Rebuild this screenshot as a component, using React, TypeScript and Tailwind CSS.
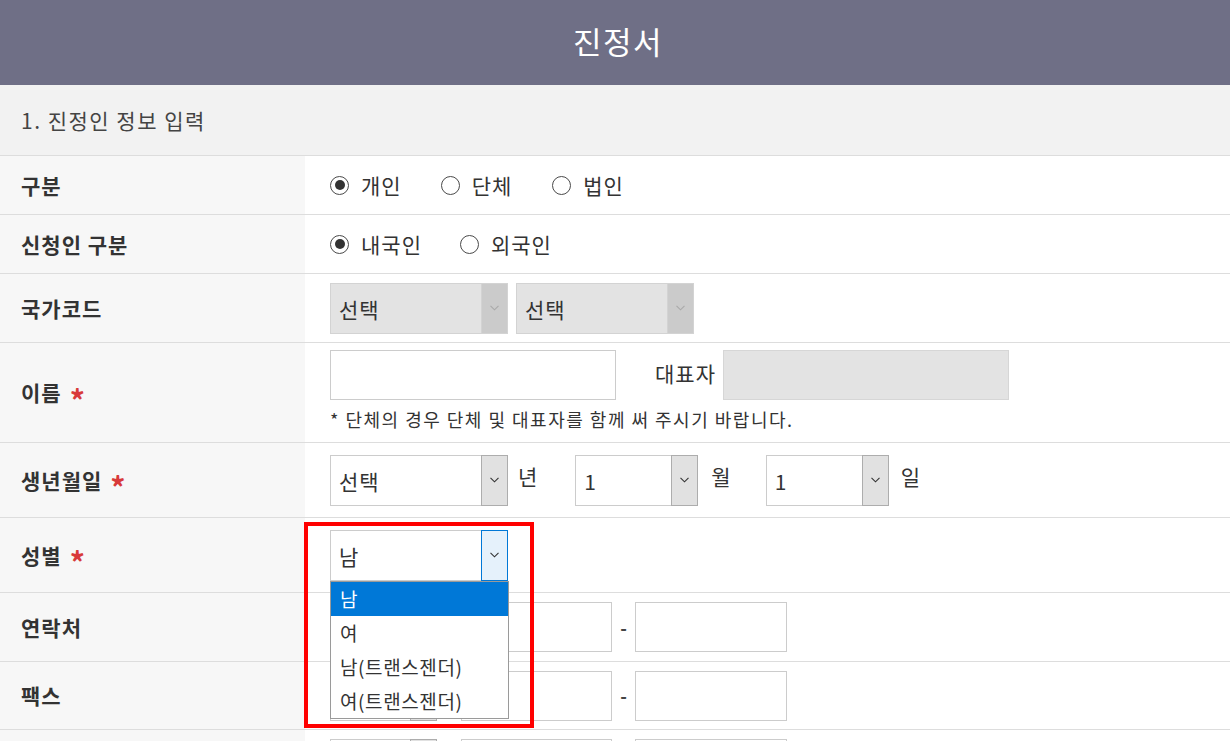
import React from "react";

const FONT = "font-[family-name:'Noto_Sans_CJK_KR','Noto_Sans',sans-serif]";

function Chevron({ color = "#444" }: { color?: string }) {
  return (
    <svg width="9" height="6" viewBox="0 0 9 6" fill="none">
      <path d="M0.5 0.8 L4.5 4.8 L8.5 0.8" stroke={color} strokeWidth="1.1" />
    </svg>
  );
}

function Radio({ checked, label, className = "" }: { checked?: boolean; label: string; className?: string }) {
  return (
    <div className={`flex items-center ${className}`}>
      <span className="w-[19px] h-[19px] rounded-full border border-[#4a4a4a] bg-white flex items-center justify-center">
        {checked && <span className="w-[10px] h-[10px] rounded-full bg-[#333]" />}
      </span>
      <span className="ml-[12px] text-[21px] tracking-[1px] leading-none text-[#333]">{label}</span>
    </div>
  );
}

type SelVariant = "disabled" | "normal" | "focus";

function Select({ text, width, variant = "normal" }: { text: string; width: string; variant?: SelVariant }) {
  const box =
    variant === "disabled"
      ? "bg-[#e3e3e3] border-[#d3d3d3]"
      : "bg-white border-[#cccccc]";
  const arrow =
    variant === "disabled"
      ? "bg-[#cbcbcb] border-[#d3d3d3]"
      : variant === "focus"
      ? "bg-[#e5f1fb] border-[#0078d7]"
      : "bg-[#e1e1e1] border-[#adadad]";
  return (
    <div className={`flex h-[51px] border ${box} ${width}`}>
      <div className="flex-1 flex items-center pl-[8px] text-[21px] tracking-[1px] leading-none text-[#333] pt-[2px]">{text}</div>
      <div className={`w-[27px] -my-px -mr-px border flex items-center justify-center ${arrow}`}>
        <Chevron color={variant === "disabled" ? "#a9a9a9" : "#333"} />
      </div>
    </div>
  );
}

function Label({ text, req }: { text?: string; req?: boolean }) {
  return (
    <div className="w-[305px] shrink-0 bg-[#f7f7f7] flex items-center pl-[21px] font-bold text-[21px] tracking-[1px] leading-none text-[#333]">
      {text}
      {req && <span className="ml-[8px] text-[#d83a3a] text-[30px] leading-none mt-[12px]">*</span>}
    </div>
  );
}

function Row({ h, label, req, children, valueClass = "flex items-center" }: { h: string; label?: string; req?: boolean; children?: React.ReactNode; valueClass?: string }) {
  return (
    <div className={`flex border-b border-[#dddddd] ${h}`}>
      <Label text={label} req={req} />
      <div className={`flex-1 pl-[25px] bg-white ${valueClass}`}>{children}</div>
    </div>
  );
}

function Input({ width, gray }: { width: string; gray?: boolean }) {
  return <div className={`h-[50px] border ${gray ? "bg-[#e3e3e3] border-[#d6d6d6]" : "bg-white border-[#cccccc]"} ${width}`} />;
}

function PhoneFields({ dash = true }: { dash?: boolean }) {
  return (
    <div className="flex items-center">
      <div className="flex h-[50px] w-[107px] border border-[#cccccc] bg-white">
        <div className="flex-1" />
        <div className="w-[27px] -my-px -mr-px border border-[#adadad] bg-[#e1e1e1] flex items-center justify-center">
          <Chevron color="#333" />
        </div>
      </div>
      <div className="ml-[24px]"><Input width="w-[151px]" /></div>
      <span className="w-[23px] text-center text-[18px] font-bold text-[#444]">{dash ? "-" : ""}</span>
      <Input width="w-[152px]" />
    </div>
  );
}

export default function App() {
  return (
    <div className={`relative w-[1230px] h-[741px] overflow-hidden bg-white ${FONT}`}>
      <div className="h-[85px] bg-[#6f6f86] flex items-center justify-center text-white text-[31px] tracking-[1.5px] leading-none pb-[4px] pl-[6px]">
        진정서
      </div>
      <div className="h-[71px] bg-[#f2f2f2] border-b border-[#dddddd] flex items-center pl-[21px] text-[21px] tracking-[1.5px] leading-none text-[#444]">
        1. 진정인 정보 입력
      </div>

      <Row h="h-[59px]" label="구분">
        <Radio checked label="개인" />
        <Radio label="단체" className="ml-[39px]" />
        <Radio label="법인" className="ml-[40px]" />
      </Row>

      <Row h="h-[59px]" label="신청인 구분">
        <Radio checked label="내국인" />
        <Radio label="외국인" className="ml-[38px]" />
      </Row>

      <Row h="h-[69px]" label="국가코드">
        <Select text="선택" width="w-[178px]" variant="disabled" />
        <div className="ml-[8px]">
          <Select text="선택" width="w-[178px]" variant="disabled" />
        </div>
      </Row>

      <Row h="h-[100px]" label="이름" req valueClass="flex flex-col pt-[7px]">
        <div className="flex items-center">
          <Input width="w-[286px]" />
          <span className="ml-[39px] text-[21px] tracking-[1px] leading-none text-[#333] mb-[4px]">대표자</span>
          <div className="ml-[7px]"><Input width="w-[286px]" gray /></div>
        </div>
        <div className="mt-[10px] text-[18px] tracking-[1.5px] leading-none text-[#333]">* 단체의 경우 단체 및 대표자를 함께 써 주시기 바랍니다.</div>
      </Row>

      <Row h="h-[75px]" label="생년월일" req>
        <Select text="선택" width="w-[178px]" />
        <span className="ml-[10px] text-[21px] leading-none text-[#333] mb-[8px]">년</span>
        <div className="ml-[38px]"><Select text="1" width="w-[123px]" /></div>
        <span className="ml-[13px] text-[21px] leading-none text-[#333] mb-[8px]">월</span>
        <div className="ml-[35px]"><Select text="1" width="w-[123px]" /></div>
        <span className="ml-[12px] text-[21px] leading-none text-[#333] mb-[8px]">일</span>
      </Row>

      <Row h="h-[75px]" label="성별" req>
        <div className="relative z-10">
          <Select text="남" width="w-[178px]" variant="focus" />
          <div className="absolute left-0 top-full w-[179px] bg-white border border-[#9a9a9a] text-[19px] tracking-[0.6px] leading-none text-[#333]">
            <div className="h-[34px] flex items-center pl-[9px] bg-[#0078d7] text-white">남</div>
            <div className="h-[34px] flex items-center pl-[9px]">여</div>
            <div className="h-[34px] flex items-center pl-[9px]">남(트랜스젠더)</div>
            <div className="h-[34px] flex items-center pl-[9px]">여(트랜스젠더)</div>
          </div>
        </div>
      </Row>

      <Row h="h-[69px]" label="연락처">
        <PhoneFields />
      </Row>

      <Row h="h-[68px]" label="팩스">
        <PhoneFields />
      </Row>

      <Row h="h-[69px]" valueClass="flex items-start pt-[9px]">
        <PhoneFields dash={false} />
      </Row>

      <div className="absolute left-[304px] top-[522px] w-[230px] h-[206px] border-[4px] border-[#ff0000] z-20 pointer-events-none" />
    </div>
  );
}
